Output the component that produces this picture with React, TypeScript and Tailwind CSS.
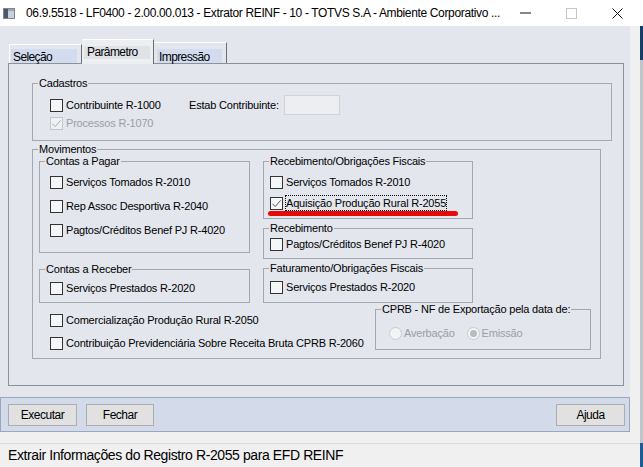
import React from 'react';

type RowProps = {
  label: string;
  checked?: boolean;
  disabled?: boolean;
  focus?: boolean;
};

const CheckBox = ({ checked, disabled }: { checked?: boolean; disabled?: boolean }) => (
  <span
    className={`flex h-[13px] w-[13px] shrink-0 items-center justify-center border ${
      disabled ? 'border-[#c3c6cc] bg-[#eef0f3]' : 'border-[#333333] bg-[#f5f6f8]'
    }`}
  >
    {checked && (
      <svg width="11" height="11" viewBox="0 0 11 11">
        <path d="M1.5 5.8 L4.2 8.6 L9.6 2.4" fill="none" stroke={disabled ? '#a9abaf' : '#555555'} strokeWidth="1" />
      </svg>
    )}
  </span>
);

const Row = ({ label, checked, disabled, focus }: RowProps) => (
  <div className="flex h-[16px] items-center gap-[3px]">
    <CheckBox checked={checked} disabled={disabled} />
    <span
      className={`whitespace-nowrap leading-[14px] ${disabled ? 'text-[#9c9ea3]' : 'text-black'} ${
        focus ? 'outline-1 outline-dotted outline-black' : ''
      }`}
    >
      {label}
    </span>
  </div>
);

const Radio = ({ label, selected }: { label: string; selected?: boolean }) => (
  <div className="flex h-[16px] items-center gap-[2px]">
    <span className="flex h-[13px] w-[13px] items-center justify-center rounded-full border border-[#c8cacf] bg-[#f3f4f6]">
      {selected && <span className="h-[7px] w-[7px] rounded-full bg-[#b9bbbf]" />}
    </span>
    <span className="text-[#9c9ea3]">{label}</span>
  </div>
);

// legend follows the fieldset's own padding, so the left inset goes on the inner box
const Group = ({
  title,
  className,
  inner = '',
  children,
}: {
  title: string;
  className: string;
  inner?: string;
  children?: React.ReactNode;
}) => (
  <fieldset className={`min-w-0 border border-[#a3a7ae] ${className}`}>
    <legend className="ml-[5px] px-px text-[11px] leading-[12px] whitespace-nowrap">{title}</legend>
    <div className={inner}>{children}</div>
  </fieldset>
);

const Tabs = () => (
  <div className="flex h-[24px] items-end pl-[9px] text-[12px] tracking-[-0.6px]">
    <div className="flex h-[19px] w-[73px] border-t border-r border-l border-t-white border-r-[#6b6e73] border-l-white pt-[4px] pr-[4px] pl-[1px]">
      <span className="flex-1 bg-[#d3dcee] pl-[2px] leading-[16px]">Seleção</span>
    </div>
    <div className="relative z-10 -mb-px flex h-[25px] w-[72px] flex-col border-t border-r border-t-white border-r-[#6b6e73] bg-[#eceef2] pt-[6px] pr-[3px] pl-[2px]">
      <span className="h-[13px] bg-[#dfe2e7] pl-[3px] leading-[13px]">Parâmetro</span>
    </div>
    <div className="flex h-[21px] w-[73px] border-t border-r border-t-white border-r-[#6b6e73] pt-[6px] pr-[4px] pl-[3px]">
      <span className="flex-1 bg-[#d3dcee] pl-[2px] leading-[16px]">Impressão</span>
    </div>
  </div>
);

const TitleBar = () => (
  <div className="flex h-[26px] items-center bg-white">
    <svg className="mr-[11px] ml-[3px] shrink-0" width="12" height="11" viewBox="0 0 12 11">
      <rect x="0.5" y="0.5" width="11" height="10" fill="#c9d0da" stroke="#7d8590" />
      <rect x="1" y="1" width="4" height="9" fill="#4d5866" />
      <rect x="5" y="1" width="6" height="2" fill="#9aa6b6" />
    </svg>
    <span className="w-[476px] shrink-0 text-[12px] tracking-[-0.35px] whitespace-nowrap">
      06.9.5518 - LF0400 - 2.00.00.013 - Extrator REINF - 10 - TOTVS S.A - Ambiente Corporativo ...
    </span>
    <div className="flex h-full w-[46px] items-center justify-center">
      <svg width="11" height="2" viewBox="0 0 11 2">
        <line x1="0" y1="1" x2="11" y2="1" stroke="#111" strokeWidth="1" />
      </svg>
    </div>
    <div className="flex h-full w-[46px] items-center justify-center">
      <svg width="11" height="11" viewBox="0 0 11 11">
        <rect x="0.5" y="0.5" width="10" height="10" fill="none" stroke="#c6c6c6" />
      </svg>
    </div>
    <div className="flex h-full w-[46px] items-center justify-center">
      <svg width="11" height="11" viewBox="0 0 11 11">
        <path d="M0.5 0.5 L10.5 10.5 M10.5 0.5 L0.5 10.5" stroke="#111" strokeWidth="1" />
      </svg>
    </div>
  </div>
);

const Button = ({ label, className }: { label: string; className: string }) => (
  <button className={`h-[22px] border border-[#adadad] bg-[#e1e1e1] text-[12px] tracking-[-0.5px] text-black ${className}`}>
    {label}
  </button>
);

export default function App() {
  return (
    <div className="flex h-[467px] w-[643px] overflow-hidden font-['Liberation_Sans',Arial,sans-serif] text-[11px] tracking-[-0.2px] text-black">
      <div className="flex w-[640px] flex-col">
        <TitleBar />

        <div className="flex h-[406px]">
          <div className="flex w-[630px] flex-col">
            <div className="h-[371px] bg-[#e3e6ed] pt-[13px]">
              <Tabs />
              <div className="ml-[8px] h-[323px] w-[616px] border border-[#8c929c] pt-[13px] pl-[23px]">
                <Group title="Cadastros" className="w-[580px] pt-[6px] pb-[9px]" inner="pl-[17px]">
                  <div className="flex h-[20px] items-center">
                    <div className="w-[139px]">
                      <Row label="Contribuinte R-1000" />
                    </div>
                    <span className="w-[95px]">Estab Contribuinte:</span>
                    <span className="h-[20px] w-[56px] border border-[#cfd2d8] bg-[#eceef2]" />
                  </div>
                  <Row label="Processos R-1070" checked disabled />
                </Group>

                <Group title="Movimentos" className="mt-[2px] w-[569px] pb-[7px]">
                  <div className="flex gap-[13px] pl-[6px]">
                    <div className="flex w-[211px] flex-col gap-[10px]">
                      <Group title="Contas a Pagar" className="w-[211px] pt-[7px] pb-[14px]" inner="flex flex-col gap-[8px] pl-[10px]">
                        <Row label="Serviços Tomados R-2010" />
                        <Row label="Rep Assoc Desportiva R-2040" />
                        <Row label="Pagtos/Créditos Benef PJ R-4020" />
                      </Group>
                      <Group title="Contas a Receber" className="w-[211px] pt-[5px] pb-[6px]" inner="pl-[10px]">
                        <Row label="Serviços Prestados R-2020" />
                      </Group>
                    </div>

                    <div className="flex w-[210px] flex-col">
                      <Group
                        title="Recebimento/Obrigações Fiscais"
                        className="w-[210px] pt-[7px] pb-[7px]"
                        inner="relative flex flex-col gap-[5px] pl-[6px]"
                      >
                        <Row label="Serviços Tomados R-2010" />
                        <Row label="Aquisição Produção Rural R-2055" checked focus />
                        <span className="absolute top-[37px] left-[4px] h-[5px] w-[190px] rounded-full bg-[#e60a0a]" />
                      </Group>
                      <Group title="Recebimento" className="mt-[3px] w-[210px] pt-[2px] pb-[6px]" inner="pl-[6px]">
                        <Row label="Pagtos/Créditos Benef PJ R-4020" />
                      </Group>
                      <Group title="Faturamento/Obrigações Fiscais" className="mt-[3px] w-[210px] pt-[5px] pb-[7px]" inner="pl-[6px]">
                        <Row label="Serviços Prestados R-2020" />
                      </Group>
                    </div>
                  </div>

                  <div className="flex items-start">
                    <div className="flex w-[342px] flex-col gap-[7px] pt-[9px] pl-[17px]">
                      <Row label="Comercialização Produção Rural R-2050" />
                      <Row label="Contribuição Previdenciária Sobre Receita Bruta CPRB R-2060" />
                    </div>
                    <Group
                      title="CPRB - NF de Exportação pela data de:"
                      className="w-[216px] pt-[10px] pb-[8px]"
                      inner="flex gap-[12px] pl-[13px]"
                    >
                      <Radio label="Averbação" />
                      <Radio label="Emissão" selected />
                    </Group>
                  </div>
                </Group>
              </div>
            </div>

            <div className="flex h-[35px] items-start border border-[#9aa7bf] bg-[#d3dbea] pt-[6px] pr-[4px] pl-[7px]">
              <Button label="Executar" className="w-[69px]" />
              <Button label="Fechar" className="ml-[9px] w-[68px]" />
              <Button label="Ajuda" className="ml-auto w-[69px]" />
            </div>
          </div>
          <div className="flex-1 bg-[#f0f0f0]" />
        </div>

        <div className="flex-1 bg-[#f0f0f0] pt-[11px]">
          <div className="h-full border-t border-[#dcdcdc] pt-[1px] pl-[8px] text-[14px] tracking-[-0.4px]">
            Extrair Informações do Registro R-2055 para EFD REINF
          </div>
        </div>
      </div>

      <div className="flex w-[3px] flex-col">
        <div className="h-[26px] bg-white" />
        <div className="h-[34px] bg-[#163f68]" />
        <div className="flex-1 bg-[#bfc3ca]" />
        <div className="h-[24px] bg-[#1d5a96]" />
      </div>
    </div>
  );
}
